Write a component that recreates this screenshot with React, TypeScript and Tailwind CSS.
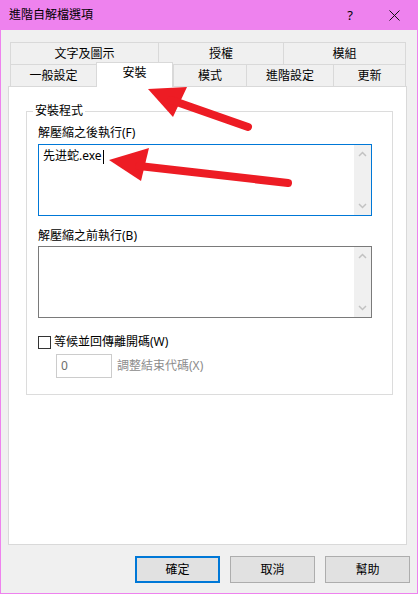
const font = "font-['Noto_Sans','Noto_Sans_CJK_TC',sans-serif]";

function Tab({ label, w, selected }: { label: string; w: string; selected?: boolean }) {
  if (selected) {
    return (
      <div
        className={`${w} relative z-10 -mt-[2px] flex h-[25px] items-start justify-center border-x border-t border-[#d9d9d9] bg-white pt-[2px] leading-[16px]`}
      >
        {label}
      </div>
    );
  }
  return (
    <div
      className={`${w} flex h-[22px] items-center justify-center border-l border-t border-[#d9d9d9] bg-[#f0f0f0] leading-[16px] last:border-r`}
    >
      {label}
    </div>
  );
}

function Scrollbar() {
  return (
    <div className="flex w-[17px] flex-col items-center justify-between bg-[#f0f0f0] py-[6px]">
      <svg width="9" height="6" viewBox="0 0 9 6">
        <path d="M1 5 L4.5 1.5 L8 5" fill="none" stroke="#c2c2c2" strokeWidth="1.5" />
      </svg>
      <svg width="9" height="6" viewBox="0 0 9 6">
        <path d="M1 1 L4.5 4.5 L8 1" fill="none" stroke="#c2c2c2" strokeWidth="1.5" />
      </svg>
    </div>
  );
}

function TextBox({ focused, children }: { focused?: boolean; children?: React.ReactNode }) {
  return (
    <div
      className={`flex h-[72px] w-[334px] border bg-white ${focused ? "border-[#0078d7]" : "border-[#7a7a7a]"}`}
    >
      <div className="flex-1 pl-[4px] pt-[3px] leading-[16px]">{children}</div>
      <Scrollbar />
    </div>
  );
}

function Button({ label, primary }: { label: string; primary?: boolean }) {
  return (
    <div
      className={`flex h-[27px] w-[85px] items-center justify-center bg-[#e1e1e1] leading-[16px] ${primary ? "border-2 border-[#0078d7]" : "border border-[#adadad]"}`}
    >
      {label}
    </div>
  );
}

export default function App() {
  return (
    <div
      className={`${font} relative flex h-[594px] w-[418px] flex-col border-x border-b border-[#ee82ee] bg-[#f0f0f0] text-[12px] text-black`}
    >
      <div className="flex h-[30px] items-center bg-[#ee82ee] pl-[8px]">
        <span className="flex-1 leading-[16px]">進階自解檔選項</span>
        <span className="mr-[15px] w-[12px] text-center text-[13px] leading-[16px]">?</span>
        <span className="flex w-[46px] justify-center">
          <svg width="11" height="11" viewBox="0 0 11 11">
            <path d="M0.5 0.5 L10.5 10.5 M10.5 0.5 L0.5 10.5" stroke="#111" strokeWidth="1" />
          </svg>
        </span>
      </div>

      <div className="flex flex-1 flex-col pt-[12px]">
        <div className="ml-[9px] flex w-[396px] flex-col">
          <div className="flex">
            <Tab label="文字及圖示" w="w-[148px]" />
            <Tab label="授權" w="w-[125px]" />
            <Tab label="模組" w="w-[123px]" />
          </div>
          <div className="flex items-start">
            <Tab label="一般設定" w="w-[86px]" />
            <Tab label="安裝" w="w-[77px]" selected />
            <Tab label="模式" w="w-[73px]" />
            <Tab label="進階設定" w="w-[87px]" />
            <Tab label="更新" w="w-[73px]" />
          </div>
        </div>

        <div className="-mt-px ml-[7px] h-[459px] w-[399px] border border-[#d9d9d9] bg-white">
          <fieldset className="ml-[17px] mt-[16px] w-[367px] border border-[#dcdcdc] pb-[16px] pl-[11px]">
            <legend className="-ml-[5px] px-[2px] leading-[16px]">安裝程式</legend>
            <div className="mt-[6px] leading-[16px]">解壓縮之後執行(F)</div>
            <div className="mt-[3px]">
              <TextBox focused>
                <span>先进蛇.exe</span>
                <span className="ml-px inline-block h-[14px] w-px bg-black align-middle" />
              </TextBox>
            </div>
            <div className="mt-[12px] leading-[16px]">解壓縮之前執行(B)</div>
            <div className="mt-[2px]">
              <TextBox />
            </div>
            <div className="mt-[16px] flex h-[16px] items-center">
              <div className="h-[13px] w-[13px] border border-[#333] bg-white" />
              <span className="ml-[3px] leading-[16px]">等候並回傳離開碼(W)</span>
            </div>
            <div className="mt-[4px] flex items-center">
              <div className="ml-[18px] flex h-[24px] w-[56px] items-center border border-[#cccccc] bg-white pl-[4px] leading-[16px] text-[#6d6d6d]">
                0
              </div>
              <span className="ml-[5px] leading-[16px] text-[#8c8c8c]">調整結束代碼(X)</span>
            </div>
          </fieldset>
        </div>

        <div className="mt-[11px] flex justify-end gap-[10px] pr-[7px]">
          <Button label="確定" primary />
          <Button label="取消" />
          <Button label="幫助" />
        </div>
      </div>

      <svg className="pointer-events-none absolute left-0 top-0" width="418" height="594" viewBox="0 0 418 594">
        <polygon points="147,89 186,87 172,117" fill="#ed1c24" />
        <line x1="170" y1="100" x2="247" y2="127" stroke="#ed1c24" strokeWidth="8" strokeLinecap="round" />
        <polygon points="108,160 148,148 140,181" fill="#ed1c24" />
        <line x1="138" y1="166" x2="287" y2="183" stroke="#ed1c24" strokeWidth="8" strokeLinecap="round" />
      </svg>
    </div>
  );
}
